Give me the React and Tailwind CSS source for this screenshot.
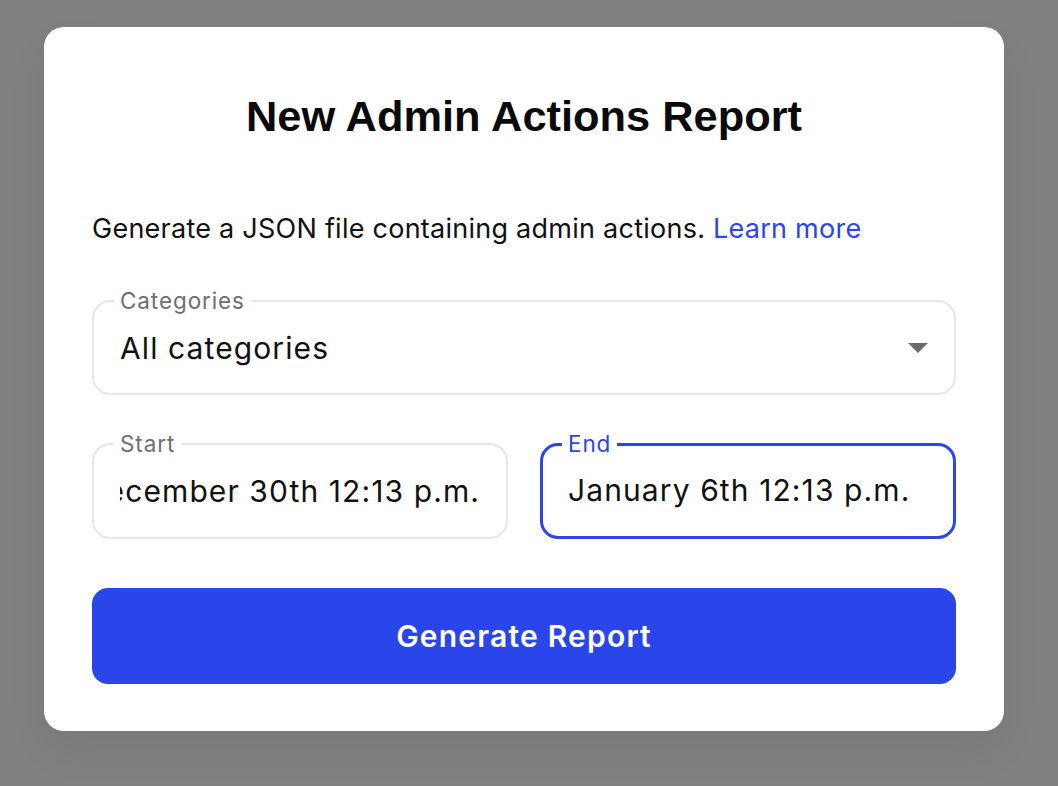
import React from "react";

const inter = { fontFamily: "Inter, 'Noto Sans', sans-serif" };

function Field({ label, active, children, className = "" }) {
  return (
    <fieldset
      className={`m-0 min-w-0 rounded-[18px] p-0 ${
        active ? "border-[3px] border-[#2b46e8]" : "border-2 border-[#e6e6eb]"
      } ${className}`}
    >
      <legend
        className={`px-[6px] text-[22.5px] leading-[24px] tracking-[0.9px] ${
          active ? "ml-[19px] text-[#2b46e8]" : "ml-[20px] text-[#6e6e73]"
        }`}
      >
        {label}
      </legend>
      {children}
    </fieldset>
  );
}

export default function App() {
  return (
    <div className="min-h-screen w-full bg-[#808080] pt-[27px]" style={inter}>
      <div className="ml-[44px] w-[960px] rounded-[20px] bg-white px-[48px] pb-[47px] pt-[65px] shadow-[0_20px_40px_rgba(0,0,0,0.06)]">
        <h1
          className="text-center text-[43.4px] font-bold leading-[48px] text-[#0a0a0a]"
          style={{ fontFamily: "'Liberation Sans', Arial, sans-serif" }}
        >
          New Admin Actions Report
        </h1>
        <p className="mt-[73px] text-[27px] leading-[32px] tracking-[0.25px] text-[#111111]">
          Generate a JSON file containing admin actions.{" "}
          <span className="text-[#2b46e8]">Learn more</span>
        </p>

        <Field label="Categories" className="mt-[44px]">
          <div className="flex items-center justify-between pb-[28px] pl-[26px] pr-[26px] pt-[18px]">
            <span className="text-[30px] leading-[34px] tracking-[1.1px] text-[#111111]">
              All categories
            </span>
            <svg width="20" height="11" viewBox="0 0 20 11">
              <polygon points="0,0 20,0 10,10" fill="#6b6b6b" />
            </svg>
          </div>
        </Field>

        <div className="mt-[37px] grid grid-cols-2 gap-[32px]">
          <Field label="Start">
            <div className="mx-[26px] flex justify-end overflow-hidden whitespace-nowrap pb-[29px] pt-[18px]">
              <span className="text-[30px] leading-[34px] tracking-[1.1px] text-[#111111]">
                December 30th 12:13 p.m.
              </span>
            </div>
          </Field>
          <Field label="End" active>
            <div className="mx-[25px] flex overflow-hidden whitespace-nowrap pb-[28px] pt-[17px]">
              <span className="text-[30px] leading-[34px] tracking-[1.1px] text-[#111111]">
                January 6th 12:13 p.m.
              </span>
            </div>
          </Field>
        </div>

        <button className="mt-[49px] flex h-[96px] w-full items-center justify-center rounded-[16px] bg-[#2a45ea] text-[30px] font-semibold tracking-[1.2px] text-white">
          Generate Report
        </button>
      </div>
    </div>
  );
}
